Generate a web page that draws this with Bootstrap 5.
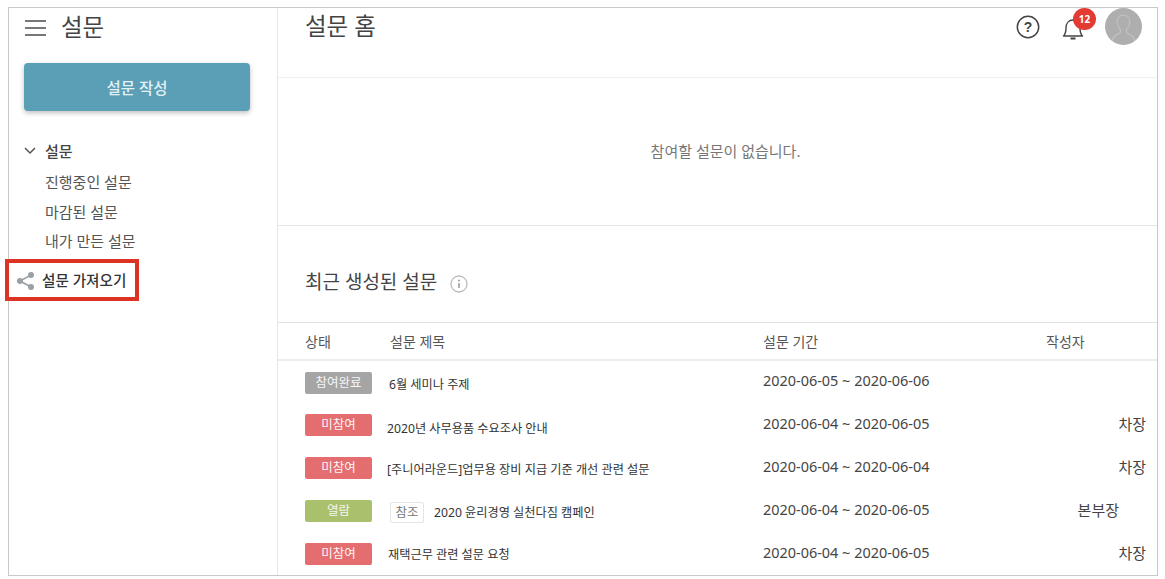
<!DOCTYPE html>
<html lang="ko">
<head>
<meta charset="utf-8">
<title>설문</title>
<link rel="stylesheet" href="https://cdn.jsdelivr.net/npm/bootstrap@5.3.0/dist/css/bootstrap.min.css">
<style>
html,body{height:100%;background:#fff;overflow:hidden}
body{font-family:"Noto Sans","Noto Sans CJK KR",sans-serif;color:#444;padding:7px 7px 3px 8px}
.frame{height:569px;border:1px solid #c9c9c9;position:relative;background:#fff}
.side{width:269px;flex:none;border-right:1px solid #e6e6e6;padding:0 0 0 15px}
.side-title{height:39px;font-size:23.500px;color:#444;gap:15px}
.ham{width:21px;height:16px;border-top:2px solid #777;border-bottom:2px solid #777;position:relative;flex:none;margin-left:1px}
.ham::after{content:"";position:absolute;left:0;right:0;top:5px;height:2px;background:#777}
.make-btn{width:226px;height:48px;margin-top:16px;padding-top:10px;background:#5b9fb6;border:0;border-radius:4px;color:#e3f0f4;font-size:15.500px;font-weight:500;box-shadow:0 2px 5px rgba(0,0,0,.25)}
.make-btn:hover{background:#5b9fb6;color:#e3f0f4}
.tree-head{margin-top:29px;height:22px;font-size:15px;font-weight:500;color:#444}
.tree-head svg{margin-right:9px}
.tree-item{display:block;height:29.500px;line-height:29.500px;padding-left:21px;font-size:15px;color:#555;text-decoration:none}
.tree-list{padding-top:6px}
.import-row{margin-top:13px;margin-left:-8px;font-size:14.600px;font-weight:500;color:#333;gap:6px;height:22px}
.red-box{position:absolute;left:-4px;top:251px;width:134px;height:42px;border:4px solid #dc3423;pointer-events:none}
.main{min-width:0}
.top-bar{height:70px;border-bottom:1px solid #f0f0f0;padding:0 15px 0 27px}
.top-title{font-size:23.500px;color:#444;line-height:1;margin-top:7px}
.top-tools{gap:0}
.help-ico{margin-top:7px}
.bell{position:relative;width:34px;margin-left:23px;margin-right:8px;height:38px}
.bell svg{position:absolute;left:-1px;top:8px}
.bell-num{position:absolute;left:10px;top:0;width:23px;height:22px;border-radius:50%;background:#e33a34;color:#fff;font-size:10px;font-weight:700;line-height:22px;text-align:center}
.notice{height:148px;border-bottom:1px solid #e8e8e8;font-size:15px;color:#777;padding-left:16px}
.recent{height:97px;padding:45px 0 0 27px;border-bottom:1px solid #e2e2e2;font-size:19px;color:#444;gap:13px}
.recent span{line-height:22px}
.info-ico{margin-top:4px}
.tbl{margin:0;table-layout:fixed;width:100%;--bs-table-border-color:transparent}
.tbl th{height:37px;padding:0;font-size:14px;font-weight:400;color:#555;vertical-align:middle;border-bottom:2px solid #ececec!important}
.tbl td{height:43px;padding:0;vertical-align:middle;border:0;font-size:12.200px;color:#333;white-space:nowrap}
.tbl .c-state{width:112px;padding-left:27px}
.tbl .c-title{width:373px}
.tbl .c-period{width:283px}
.tbl td.c-state{padding-top:1px}
.tbl td.c-period{font-size:14.450px;color:#444;padding-bottom:2px}
.tbl td.c-writer{font-size:15px;color:#444;text-align:right;padding-right:11px;padding-bottom:1px}
.tbl td.c-writer.mid{padding-right:38px}
.tbl td.t1{padding-top:6px;text-indent:-1px}
.tbl td.t2{padding-top:10px;text-indent:-3px}
.tbl td.t3{padding-top:6px;text-indent:-3px}
.tbl td.t4{padding-top:4px}
.tbl td.t5{padding-top:4px;text-indent:-2px}
.pill{display:block;width:67px;height:22px;border-radius:2px;line-height:22px;text-align:center;font-size:12.500px;color:#f6f6f6}
.p-done{background:#a5a5a5}
.p-no{background:#e46d70}
.p-open{background:#a9c16d}
.ref-tag{display:inline-block;width:34px;height:21px;line-height:19px;border:1px solid #e4e4e4;border-radius:2px;text-align:center;font-size:12.500px;color:#777;margin-right:10px}
</style>
</head>
<body>
<div class="frame d-flex">
  <aside class="side">
    <div class="side-title d-flex align-items-center"><span class="ham"></span><span>설문</span></div>
    <button type="button" class="btn make-btn d-block">설문 작성</button>
    <div class="tree-head d-flex align-items-center">
      <svg width="12" height="8" viewBox="0 0 12 8"><path d="M1 1l5 5 5-5" fill="none" stroke="#555" stroke-width="1.500"/></svg><span>설문</span>
    </div>
    <div class="tree-list">
      <a class="tree-item" href="#">진행중인 설문</a>
      <a class="tree-item" href="#">마감된 설문</a>
      <a class="tree-item" href="#">내가 만든 설문</a>
    </div>
    <div class="import-row d-flex align-items-center">
      <svg width="20" height="20" viewBox="0 0 20 20"><g fill="#9aa0a6"><circle cx="4" cy="10" r="3"/><circle cx="15" cy="4" r="3"/><circle cx="15" cy="16" r="3"/></g><path d="M4 10L15 4M4 10l11 6" stroke="#9aa0a6" stroke-width="1.500" fill="none"/></svg>
      <span>설문 가져오기</span>
    </div>
    <div class="red-box"></div>
  </aside>
  <main class="main flex-grow-1">
    <div class="top-bar d-flex justify-content-between align-items-start">
      <div class="top-title">설문 홈</div>
      <div class="top-tools d-flex align-items-start">
        <svg class="help-ico" width="24" height="24" viewBox="0 0 24 24"><circle cx="12" cy="12" r="10.700" fill="none" stroke="#444" stroke-width="1.500"/><text x="12" y="17" text-anchor="middle" font-family="Liberation Sans" font-weight="700" font-size="14" fill="#444">?</text></svg>
        <div class="bell">
          <svg width="22" height="26" viewBox="0 0 22 26"><path d="M1.500 20c2-2 2.500-3.500 2.500-8 0-5 3-8 7-8s7 3 7 8c0 4.500.5 6 2.500 8z" fill="#fff" stroke="#444" stroke-width="1.400" stroke-linejoin="round"/><path d="M8.500 22.500h5" stroke="#444" stroke-width="2"/></svg>
          <span class="bell-num">12</span>
        </div>
        <svg width="37" height="37" viewBox="0 0 36 36"><circle cx="18" cy="18" r="18" fill="#aeaeae"/><path d="M7 32c1-6 6-6 8-8v-3c-2-2-3-5-3-8 0-4 3-6 6-6s6 2 6 6c0 3-1 6-3 8v3c2 2 7 2 8 8" fill="none" stroke="#c0c0c0" stroke-width="1.300"/></svg>
      </div>
    </div>
    <div class="notice d-flex align-items-center justify-content-center">참여할 설문이 없습니다.</div>
    <div class="recent d-flex align-items-start">
      <span>최근 생성된 설문</span>
      <svg class="info-ico" width="18" height="18" viewBox="0 0 18 18"><circle cx="9" cy="9" r="8" fill="none" stroke="#bbb" stroke-width="1.300"/><path d="M9 8v5" stroke="#999" stroke-width="1.500"/><circle cx="9" cy="5.500" r="1" fill="#999"/></svg>
    </div>
    <table class="table tbl">
      <thead><tr><th class="c-state">상태</th><th class="c-title">설문 제목</th><th class="c-period">설문 기간</th><th class="c-writer">작성자</th></tr></thead>
      <tbody>
        <tr><td class="c-state"><span class="pill p-done">참여완료</span></td><td class="c-title t1">6월 세미나 주제</td><td class="c-period">2020-06-05 ~ 2020-06-06</td><td class="c-writer"></td></tr>
        <tr><td class="c-state"><span class="pill p-no">미참여</span></td><td class="c-title t2">2020년 사무용품 수요조사 안내</td><td class="c-period">2020-06-04 ~ 2020-06-05</td><td class="c-writer">차장</td></tr>
        <tr><td class="c-state"><span class="pill p-no">미참여</span></td><td class="c-title t3">[주니어라운드]업무용 장비 지급 기준 개선 관련 설문</td><td class="c-period">2020-06-04 ~ 2020-06-04</td><td class="c-writer">차장</td></tr>
        <tr><td class="c-state"><span class="pill p-open">열람</span></td><td class="c-title t4"><span class="ref-tag">참조</span>2020 윤리경영 실천다짐 캠페인</td><td class="c-period">2020-06-04 ~ 2020-06-05</td><td class="c-writer mid">본부장</td></tr>
        <tr><td class="c-state"><span class="pill p-no">미참여</span></td><td class="c-title t5">재택근무 관련 설문 요청</td><td class="c-period">2020-06-04 ~ 2020-06-05</td><td class="c-writer">차장</td></tr>
      </tbody>
    </table>
  </main>
</div>
<script src="https://cdn.jsdelivr.net/npm/bootstrap@5.3.0/dist/js/bootstrap.bundle.min.js"></script>
</body>
</html>
